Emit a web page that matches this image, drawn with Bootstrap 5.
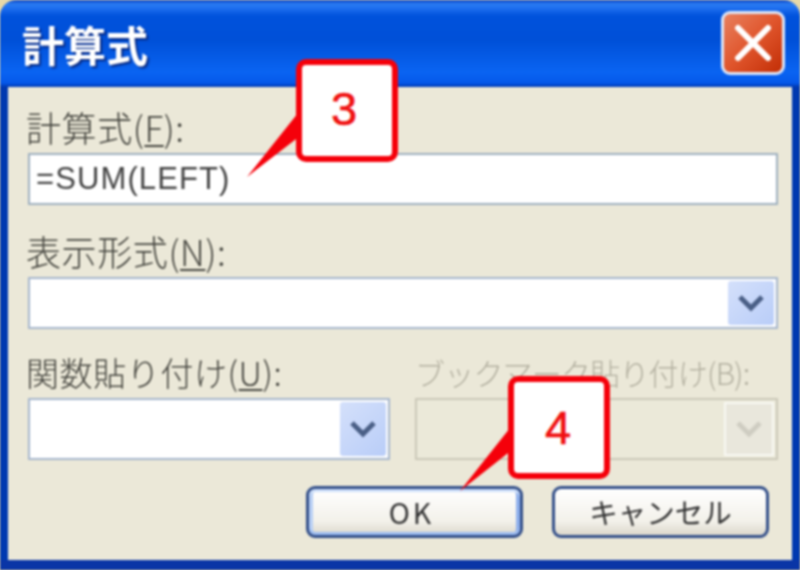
<!DOCTYPE html>
<html lang="ja">
<head>
<meta charset="utf-8">
<title>計算式</title>
<link href="https://cdn.jsdelivr.net/npm/bootstrap@5.3.0/dist/css/bootstrap.min.css" rel="stylesheet">
<style>
html,body{margin:0;width:800px;height:570px;overflow:hidden;background:#e8d9a8}
.dlg{position:relative;width:800px;height:570px;border-radius:16px 16px 0 0;overflow:hidden;filter:blur(.9px);
  background:linear-gradient(#0a3fc0 0,#2a7cf2 4px,#1f6ff0 8px,#0052dc 16px,#0050d8 40px,#0a64f2 72px,#0558ea 83px,#0038b0 87px);
  font-family:"Noto Sans CJK JP","Liberation Sans",sans-serif;color:#333}
.ttl{height:87px;padding:0 15px 0 22px}
.ttl-text{font-size:42px;font-weight:700;color:#fff;line-height:1;text-shadow:2px 2px 2px #0a2a80;margin-top:1px}
.xbtn{width:64px;height:64px;margin-top:-1px;border:3px solid #dfe6f6;border-radius:9px;background:linear-gradient(135deg,#e8805e,#e0552c 50%,#c22e06);padding:0}
.panel{height:473px;margin:0 8px 10px;padding:22px 14px 22px 20px;background:#ebe8d8}
.outer-b{position:absolute;left:0;right:0;bottom:0;height:10px;background:#0a35a6}
.fld{font-size:35px;line-height:36px;height:44px;margin:0 0 0 -2px;padding:0;font-weight:300;color:#45453f;white-space:nowrap;display:block;letter-spacing:.6px}
.fld u{text-underline-offset:3px;text-decoration-thickness:2px}
.fld-mid{font-size:33px}
.fld-off{color:#b3b0a0;font-size:30px;letter-spacing:-.8px;margin-left:0}
.boxy{height:52px;background:#fff;border:2px solid #9fb0bf;border-radius:0;padding:0 6px;font-family:"Liberation Sans",sans-serif;font-size:31px;line-height:48px;color:#444;letter-spacing:1.1px}
.gap-a{margin-bottom:28px}
.gap-b{margin-bottom:25px}
.combo{display:flex;justify-content:flex-end;align-items:center;padding:2px;border:2px solid #a6b6cc}
.combo-tall{height:62px}
.arrow{width:46px;height:100%;background:linear-gradient(135deg,#d4e0fb,#b9cdf8);border-radius:3px;display:flex;align-items:center;justify-content:center}
.combo-off{background:#ebe9d9;border-color:#cbc8b8}
.combo-off .arrow{background:#e9e7dc;border:2px solid #f8f8f3;border-radius:0;width:50px}
.two{display:grid;grid-template-columns:362px 363px;column-gap:25px}
.acts{margin-top:26px;padding-right:9px;gap:29px}
.wbtn{width:217px;height:52px;padding:0;border:3px solid #34508a;border-radius:9px;background:linear-gradient(#fff,#f3f1ea 70%,#dcd8cc);font-size:28.5px;line-height:44px;color:#333;font-family:"Noto Sans CJK JP","Liberation Sans",sans-serif}
.wbtn-ok{letter-spacing:3px;padding-right:6px;box-shadow:inset 0 3px 0 #cfe0fa,inset 0 -3px 0 #9dbcf0,inset 4px 0 0 #b8cff4,inset -4px 0 0 #8fb0ec}
.note{position:absolute;width:102px;height:103px;border:6px solid #f5000a;border-radius:10px;background:#fff;display:flex;align-items:center;justify-content:center;color:#f01010;font-family:"Liberation Sans",sans-serif;font-size:47px;line-height:1;-webkit-text-stroke:.6px #f01010}
.note-3{left:296px;top:59px;padding:0 6px 4px 0}
.note-4{left:508px;top:376px;padding-right:2px}
.tail{position:absolute;left:0;top:0}
</style>
</head>
<body>
<div class="dlg">
  <div class="ttl d-flex justify-content-between align-items-center">
    <div class="ttl-text">計算式</div>
    <button type="button" class="xbtn d-flex align-items-center justify-content-center" aria-label="閉じる">
      <svg width="40" height="40" viewBox="0 0 40 40"><path d="M5 5 35 35M35 5 5 35" stroke="#fff" stroke-width="6" stroke-linecap="round"/></svg>
    </button>
  </div>
  <div class="panel">
    <label class="fld">計算式(<u>F</u>):</label>
    <div class="form-control boxy gap-a">=SUM(LEFT)</div>
    <label class="fld">表示形式(<u>N</u>):</label>
    <div class="form-control boxy combo gap-b"><span class="arrow"><svg width="30" height="20" viewBox="0 0 30 20"><path d="M4 4 15 15 26 4" fill="none" stroke="#4a5f86" stroke-width="5"/></svg></span></div>
    <div class="two">
      <div>
        <label class="fld fld-mid">関数貼り付け(<u>U</u>):</label>
        <div class="form-control boxy combo combo-tall"><span class="arrow"><svg width="30" height="20" viewBox="0 0 30 20"><path d="M4 4 15 15 26 4" fill="none" stroke="#4a5f86" stroke-width="5"/></svg></span></div>
      </div>
      <div>
        <label class="fld fld-off">ブックマーク貼り付け(B):</label>
        <div class="form-control boxy combo combo-tall combo-off"><span class="arrow"><svg width="30" height="20" viewBox="0 0 30 20"><path d="M4 4 15 15 26 4" fill="none" stroke="#cfcdc2" stroke-width="5"/></svg></span></div>
      </div>
    </div>
    <div class="d-flex justify-content-end acts">
      <button type="button" class="btn wbtn wbtn-ok">OK</button>
      <button type="button" class="btn wbtn">キャンセル</button>
    </div>
  </div>
  <div class="outer-b"></div>
  <svg class="tail" width="800" height="570" viewBox="0 0 800 570">
    <path d="M302 108 300 136 247 177Z" fill="#f5000a"/>
    <path d="M514 423 512 450 460 491Z" fill="#f5000a"/>
  </svg>
  <div class="note note-3">3</div>
  <div class="note note-4">4</div>
</div>
<script src="https://cdn.jsdelivr.net/npm/bootstrap@5.3.0/dist/js/bootstrap.bundle.min.js"></script>
</body>
</html>
